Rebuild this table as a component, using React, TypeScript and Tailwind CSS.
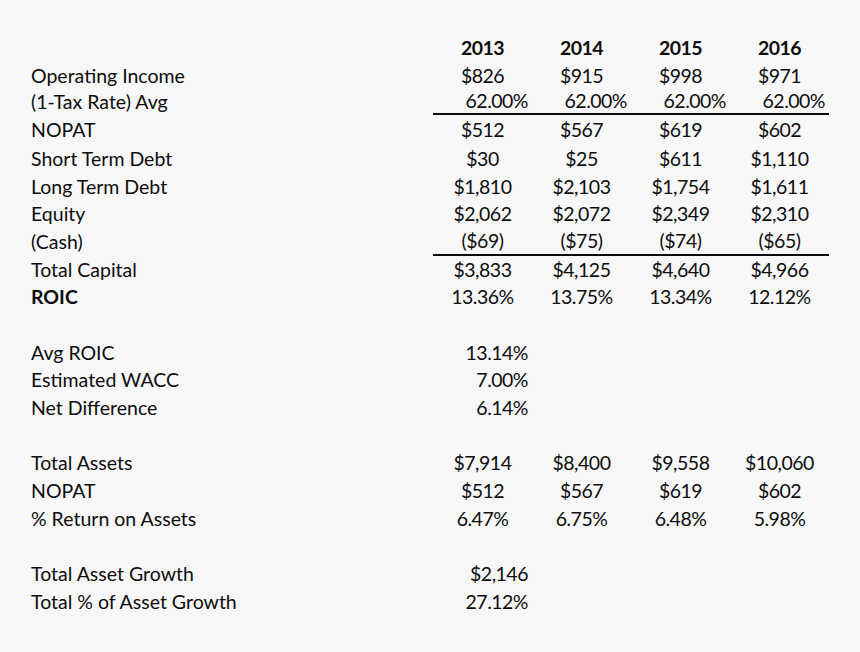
import React from "react";

type Align = "c" | "r";
type Row = {
  label: string;
  boldLabel?: boolean;
  values: string[];
  align?: Align;
  bold?: boolean;
  border?: boolean;
  h?: string;
};

const rows: (Row | null)[] = [
  { label: "", values: ["2013", "2014", "2015", "2016"], bold: true },
  { label: "Operating Income", values: ["$826", "$915", "$998", "$971"] },
  { label: "(1-Tax Rate) Avg", values: ["62.00%", "62.00%", "62.00%", "62.00%"], align: "r", border: true, h: "h-[25.7px]" },
  { label: "NOPAT", values: ["$512", "$567", "$619", "$602"], h: "h-[29.7px]" },
  { label: "Short Term Debt", values: ["$30", "$25", "$611", "$1,110"] },
  { label: "Long Term Debt", values: ["$1,810", "$2,103", "$1,754", "$1,611"] },
  { label: "Equity", values: ["$2,062", "$2,072", "$2,349", "$2,310"] },
  { label: "(Cash)", values: ["($69)", "($75)", "($74)", "($65)"], border: true },
  { label: "Total Capital", values: ["$3,833", "$4,125", "$4,640", "$4,966"] },
  { label: "ROIC", boldLabel: true, values: ["13.36%", "13.75%", "13.34%", "12.12%"] },
  null,
  { label: "Avg ROIC", values: ["13.14%", "", "", ""], align: "r" },
  { label: "Estimated WACC", values: ["7.00%", "", "", ""], align: "r" },
  { label: "Net Difference", values: ["6.14%", "", "", ""], align: "r" },
  null,
  { label: "Total Assets", values: ["$7,914", "$8,400", "$9,558", "$10,060"] },
  { label: "NOPAT", values: ["$512", "$567", "$619", "$602"] },
  { label: "% Return on Assets", values: ["6.47%", "6.75%", "6.48%", "5.98%"] },
  null,
  { label: "Total Asset Growth", values: ["$2,146", "", "", ""], align: "r" },
  { label: "Total % of Asset Growth", values: ["27.12%", "", "", ""], align: "r" },
];

export default function App() {
  return (
    <div
      className="w-[860px] h-[652px] bg-[#f7f7f7] text-[#0d0d0d] pt-[34px] pl-[31px] overflow-hidden"
      style={{ fontFamily: "Lato, 'Liberation Sans', sans-serif" }}
    >
      <div className="grid grid-cols-[402px_99px_99px_99px_99px] text-[19.5px] leading-none">
        {rows.map((r, i) => {
          if (!r) {
            return <div key={i} className="col-span-5 h-[27.7px]" />;
          }
          const h = r.h ?? "h-[27.7px]";
          return (
            <React.Fragment key={i}>
              <div className={`${h} flex items-center ${r.boldLabel ? "font-bold" : ""}`}>
                {r.label}
              </div>
              {r.values.map((v, j) => (
                <div
                  key={j}
                  className={`${h} flex items-center tracking-[-0.5px] ${
                    r.align === "r" ? "justify-end pr-[4px]" : "justify-center"
                  } ${r.bold ? "font-bold" : ""} ${r.border ? "border-b-2 border-[#0d0d0d]" : ""}`}
                >
                  {v}
                </div>
              ))}
            </React.Fragment>
          );
        })}
      </div>
    </div>
  );
}
